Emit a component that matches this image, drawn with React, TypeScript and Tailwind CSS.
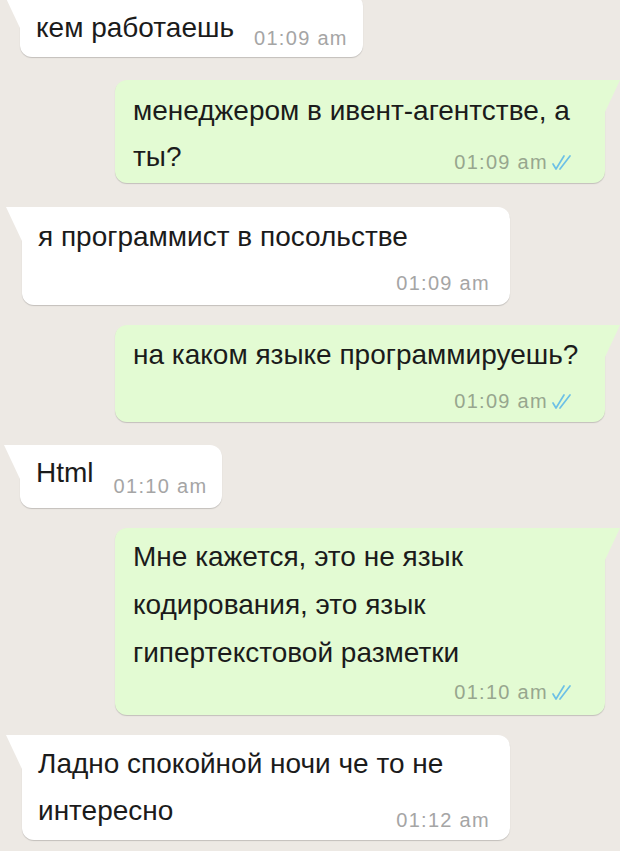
import React from "react";

type Msg = {
  out: boolean;
  lines: string[];
  time: string;
  inline: boolean; // time sits on the last text line
  cls: string; // size + spacing for this bubble
  lead: string;
  timeCls: string;
};

const messages: Msg[] = [
  { out: false, lines: ["кем работаешь"], time: "01:09 am", inline: true, cls: "mt-[-6px] pt-[10px] pb-[5px] pr-[15px]", lead: "leading-[48px]", timeCls: "mb-[4px]" },
  { out: true, lines: ["менеджером в ивент-агентстве, а", "ты?"], time: "01:09 am", inline: true, cls: "w-[490px] mt-[23px] pt-[8px] pb-[3px]", lead: "leading-[46px]", timeCls: "mb-[8px]" },
  { out: false, lines: ["я программист в посольстве"], time: "01:09 am", inline: false, cls: "w-[488px] ml-[22px] mt-[24px] pt-[6px] pb-[7px] pr-[20px]", lead: "leading-[47px]", timeCls: "mt-[8px]" },
  { out: true, lines: ["на каком языке программируешь?"], time: "01:09 am", inline: false, cls: "w-[490px] mt-[20px] pt-[6px] pb-[6px]", lead: "leading-[47px]", timeCls: "mt-[8px]" },
  { out: false, lines: ["Html"], time: "01:10 am", inline: true, cls: "mt-[23px] pt-[4px] pb-[12px] pr-[15px]", lead: "leading-[47px]", timeCls: "mb-[0px]" },
  { out: true, lines: ["Мне кажется, это не язык", "кодирования, это язык", "гипертекстовой разметки"], time: "01:10 am", inline: false, cls: "w-[490px] mt-[20px] pt-[5px] pb-[8px]", lead: "leading-[48px]", timeCls: "mt-[0px]" },
  { out: false, lines: ["Ладно спокойной ночи че то не", "интересно"], time: "01:12 am", inline: true, cls: "w-[488px] ml-[22px] mt-[20px] pt-[5px] pb-[6px] pr-[20px]", lead: "leading-[47px]", timeCls: "mb-[4px]" },
];

function Ticks() {
  return (
    <svg width="25" height="17" viewBox="0 0 25 17" fill="none" stroke="#6cc0e6" strokeWidth="1.7" strokeLinecap="round" strokeLinejoin="round">
      <polyline points="3,10 6,15 14,2" />
      <polyline points="10,15 20,2" />
    </svg>
  );
}

function Bubble({ m }: { m: Msg }) {
  const last = m.lines[m.lines.length - 1];
  const head = m.lines.slice(0, -1);
  const text = `whitespace-nowrap text-[28px] ${m.lead} text-[#1b1b1b]`;
  const time = (
    <span
      className={`flex shrink-0 items-center gap-[2px] text-[20px] leading-none tracking-[1.3px] ${
        m.out ? "text-[#97a68e]" : "text-[#a5a5a5]"
      } ${m.inline ? m.timeCls : ""}`}
    >
      {m.time}
      {m.out && <Ticks />}
    </span>
  );
  return (
    <div
      className={`relative rounded-[12px] shadow-[0_1px_1px_rgba(0,0,0,0.18)] ${
        m.out
          ? "self-end mr-[15px] rounded-tr-none bg-[#e3fbd3] pl-[18px] pr-[30px]"
          : "self-start ml-[20px] rounded-tl-none bg-white pl-[16px]"
      } ${m.cls}`}
    >
      {/* tail */}
      {m.out ? (
        <svg className="absolute top-0 right-[-15px]" width="15" height="32" viewBox="0 0 15 32">
          <path d="M0 0 L15 0 L0 32 Z" fill="#e3fbd3" />
        </svg>
      ) : (
        <svg className="absolute top-0 left-[-16px]" width="16" height="34" viewBox="0 0 16 34">
          <path d="M0 0 L16 0 L16 34 Z" fill="#ffffff" />
        </svg>
      )}
      {head.map((l) => (
        <div key={l} className={text}>
          {l}
        </div>
      ))}
      {m.inline ? (
        <div className="flex items-end justify-between gap-[20px]">
          <span className={text}>{last}</span>
          {time}
        </div>
      ) : (
        <>
          <div className={text}>{last}</div>
          <div className={`flex h-[30px] items-center justify-end ${m.timeCls}`}>{time}</div>
        </>
      )}
    </div>
  );
}

export default function App() {
  return (
    <div className="h-[851px] w-[620px] overflow-hidden bg-[#ede9e4] font-['Liberation_Sans',Arial,sans-serif]">
      <div className="flex flex-col">
        {messages.map((m, i) => (
          <Bubble key={i} m={m} />
        ))}
      </div>
    </div>
  );
}
